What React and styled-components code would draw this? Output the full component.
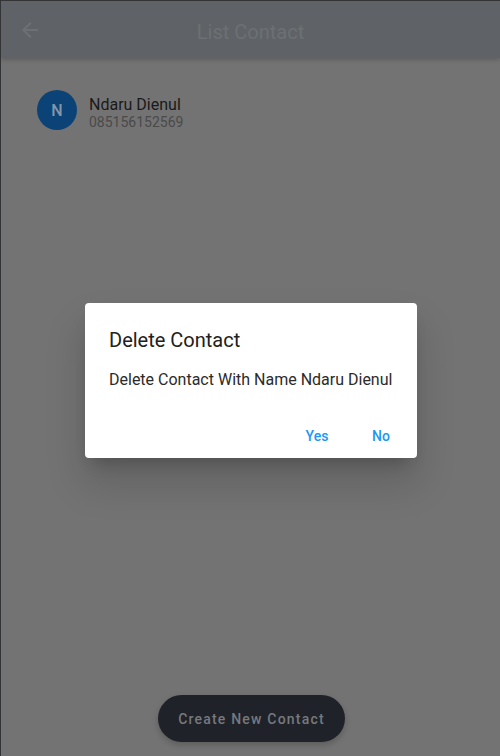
import React from "react";
import styled, { createGlobalStyle } from "styled-components";

const Global = createGlobalStyle`
  html, body { margin: 0; padding: 0; }
  body { font-family: Roboto, "Noto Sans", Arial, sans-serif; background: #737373; }
  * { box-sizing: border-box; }
`;

const Screen = styled.div`
  position: relative;
  width: 500px;
  height: 756px;
  background: #737373;
  border-top: 1px solid #333436;
  border-left: 1px solid #333436;
  overflow: hidden;
  display: flex;
  flex-direction: column;
`;

const AppBar = styled.header`
  height: 57px;
  flex: none;
  background: #5f6367;
  display: flex;
  align-items: center;
  position: relative;
  box-shadow: 0 2px 4px rgba(0, 0, 0, 0.18);
  z-index: 1;
`;

const BackButton = styled.button`
  width: 56px;
  height: 56px;
  border: none;
  background: transparent;
  padding: 0 0 0 17px;
  display: flex;
  align-items: center;
  color: #6e7174;
`;

const Title = styled.h1`
  position: absolute;
  left: 0;
  right: 0;
  top: 50%;
  transform: translateY(-50%);
  margin: 2px 0 0;
  text-align: center;
  font-size: 20px;
  font-weight: 400;
  color: #6d7073;
  pointer-events: none;
`;

const List = styled.main`
  flex: 1;
  padding: 32px 0 0 36px;
`;

const Row = styled.div`
  display: flex;
  align-items: center;
  gap: 12px;
`;

const Avatar = styled.div`
  width: 40px;
  height: 40px;
  border-radius: 50%;
  background: #0c4377;
  color: #8497aa;
  display: flex;
  align-items: center;
  justify-content: center;
  font-size: 16px;
  font-weight: 500;
`;

const Info = styled.div`
  display: flex;
  flex-direction: column;
  padding-top: 5px;
`;

const Name = styled.span`
  font-size: 16px;
  color: #1a1a1a;
  line-height: 19px;
`;

const Phone = styled.span`
  font-size: 14px;
  color: #4a4a4a;
  line-height: 16px;
`;

const Fab = styled.button`
  position: absolute;
  left: 157px;
  bottom: 14px;
  width: 187px;
  height: 47px;
  border: none;
  border-radius: 24px;
  background: #1f2229;
  color: #76797e;
  font-family: Roboto, sans-serif;
  font-size: 14px;
  font-weight: 500;
  letter-spacing: 1.2px;
  box-shadow: 0 3px 6px rgba(0, 0, 0, 0.2);
`;

const Overlay = styled.div`
  position: absolute;
  inset: 0;
  display: flex;
  align-items: flex-start;
  justify-content: flex-start;
  padding: 302px 0 0 84px;
  z-index: 2;
`;

const Dialog = styled.div`
  width: 332px;
  height: 155px;
  background: #fff;
  border-radius: 4px;
  box-shadow: 0 11px 15px -7px rgba(0, 0, 0, 0.2), 0 24px 38px 3px rgba(0, 0, 0, 0.14);
  display: flex;
  flex-direction: column;
  padding: 23px 0 0 24px;
`;

const DialogTitle = styled.h2`
  margin: 0;
  font-size: 20px;
  font-weight: 400;
  color: #212121;
  line-height: 28px;
`;

const DialogBody = styled.p`
  margin: 16px 0 0;
  font-size: 16px;
  color: #2b2b2b;
  line-height: 20px;
`;

const Actions = styled.div`
  display: flex;
  justify-content: flex-end;
  gap: 8px;
  margin-top: 28px;
  padding-right: 8px;
`;

const TextButton = styled.button`
  border: none;
  background: transparent;
  min-width: 56px;
  height: 36px;
  color: #2196f3;
  font-family: Roboto, sans-serif;
  font-size: 14px;
  font-weight: 500;
  padding: 0 8px;
`;

export default function App() {
  return (
    <>
      <Global />
      <Screen>
        <AppBar>
          <BackButton aria-label="Back">
            <svg width="24" height="24" viewBox="0 0 24 24">
              <path
                fill="currentColor"
                d="M20 11H7.83l5.59-5.59L12 4l-8 8 8 8 1.41-1.41L7.83 13H20v-2z"
              />
            </svg>
          </BackButton>
          <Title>List Contact</Title>
        </AppBar>
        <List>
          <Row>
            <Avatar>N</Avatar>
            <Info>
              <Name>Ndaru Dienul</Name>
              <Phone>085156152569</Phone>
            </Info>
          </Row>
        </List>
        <Fab>Create New Contact</Fab>
        <Overlay>
          <Dialog>
            <DialogTitle>Delete Contact</DialogTitle>
            <DialogBody>Delete Contact With Name Ndaru Dienul</DialogBody>
            <Actions>
              <TextButton>Yes</TextButton>
              <TextButton>No</TextButton>
            </Actions>
          </Dialog>
        </Overlay>
      </Screen>
    </>
  );
}
